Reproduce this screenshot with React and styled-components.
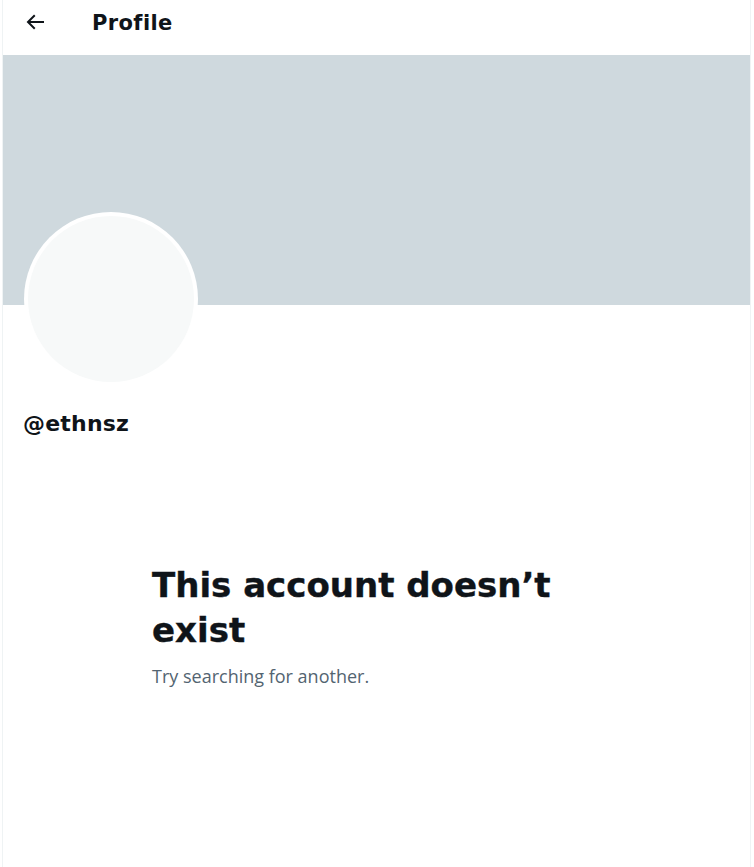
import React from 'react';
import styled, { createGlobalStyle } from 'styled-components';

const GlobalStyle = createGlobalStyle`
  html, body {
    margin: 0;
    padding: 0;
    background: #ffffff;
  }
  body {
    font-family: "Open Sans", "Noto Sans", "Liberation Sans", sans-serif;
    color: #0f1419;
  }
`;

const BackIcon = () => (
  <svg viewBox="0 0 24 24" width="24" height="24" aria-hidden="true">
    <path
      fill="#0f1419"
      d="M7.414 13l5.043 5.04-1.414 1.42L3.586 12l7.457-7.46 1.414 1.42L7.414 11H21v2H7.414z"
    />
  </svg>
);

const App = () => {
  return (
    <>
      <GlobalStyle />
      <Column>
        <Header>
          <BackButton aria-label="Back">
            <BackIcon />
          </BackButton>
          <Title>Profile</Title>
        </Header>
        <Banner />
        <ProfileInfo>
          <Avatar>
            <AvatarInner />
          </Avatar>
          <Handle>@ethnsz</Handle>
        </ProfileInfo>
        <EmptyState>
          <EmptyTitle>This account doesn’t exist</EmptyTitle>
          <EmptyText>Try searching for another.</EmptyText>
        </EmptyState>
      </Column>
    </>
  );
};

export default App;

const Column = styled.div`
  width: 749px;
  min-height: 867px;
  margin-left: 2px;
  border-left: 1px solid #eff3f4;
  border-right: 1px solid #eff3f4;
  display: flex;
  flex-direction: column;
  box-sizing: border-box;
`;

const Header = styled.div`
  height: 55px;
  display: flex;
  align-items: center;
  padding: 0 16px 0 18px;
  gap: 43px;
  box-sizing: border-box;
`;

const BackButton = styled.div`
  width: 28px;
  height: 28px;
  display: flex;
  align-items: center;
  justify-content: center;
  margin-top: -11px;
`;

const Title = styled.h2`
  margin: 0;
  margin-top: -9px;
  font-family: "DejaVu Sans", "Open Sans", sans-serif;
  font-size: 21px;
  font-weight: 700;
  letter-spacing: 0.4px;
  line-height: 24px;
  color: #0f1419;
`;

const Banner = styled.div`
  height: 250px;
  background: #cfd9de;
`;

const ProfileInfo = styled.div`
  display: flex;
  flex-direction: column;
  align-items: flex-start;
  padding: 0 20px;
`;

const Avatar = styled.div`
  width: 174px;
  height: 174px;
  margin-top: -93px;
  border-radius: 50%;
  background: #ffffff;
  padding: 4px;
  box-sizing: border-box;
  margin-left: 1px;
`;

const AvatarInner = styled.div`
  width: 100%;
  height: 100%;
  border-radius: 50%;
  background: #f7f9f9;
`;

const Handle = styled.div`
  margin-top: 24px;
  font-family: "DejaVu Sans", "Open Sans", sans-serif;
  font-size: 22px;
  font-weight: 700;
  letter-spacing: 0.2px;
  line-height: 28px;
  color: #0f1419;
`;

const EmptyState = styled.div`
  width: 410px;
  margin: 125px 0 0 149px;
`;

const EmptyTitle = styled.h1`
  margin: 0;
  font-family: "DejaVu Sans", "Open Sans", sans-serif;
  font-size: 34px;
  font-weight: 700;
  line-height: 45px;
  color: #0f1419;
  -webkit-text-stroke: 0.4px #0f1419;
`;

const EmptyText = styled.p`
  margin: 12px 0 0;
  font-size: 18px;
  line-height: 22px;
  color: #536471;
`;
